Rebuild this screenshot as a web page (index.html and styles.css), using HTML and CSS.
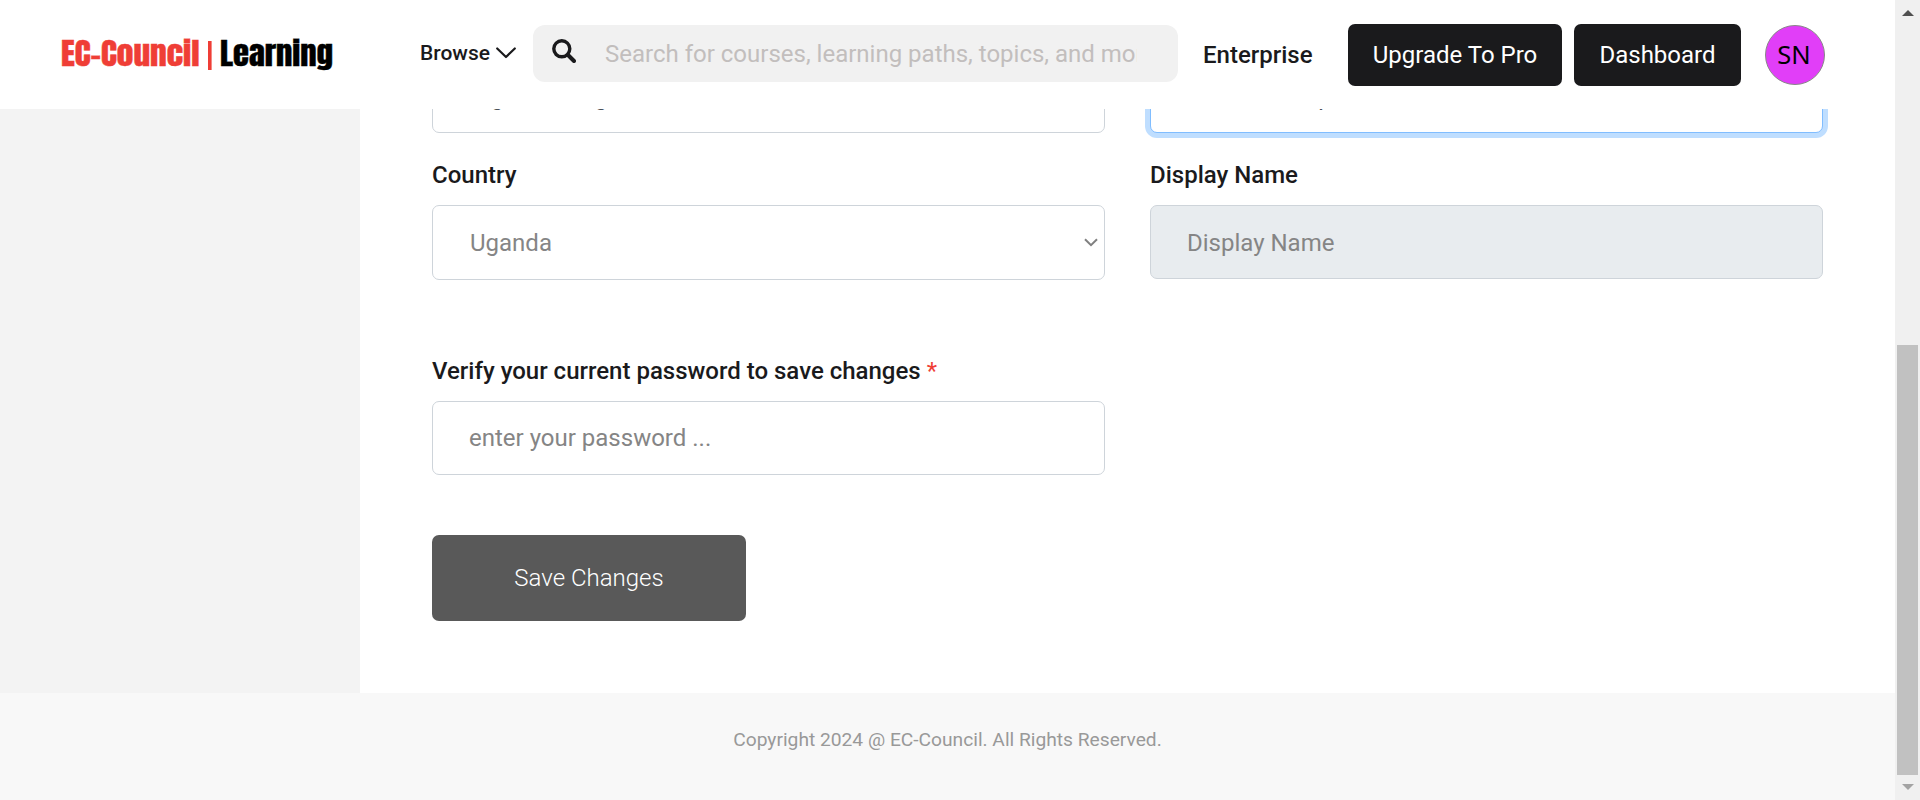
FILE: index.html
```html
<!DOCTYPE html>
<html lang="en">
<head>
<meta charset="utf-8">
<title>EC-Council Learning</title>
<link rel="stylesheet" href="styles.css">
</head>
<body>
<div class="window">
  <div class="page">
    <header class="header">
      <svg class="logo" width="276" height="60" viewBox="0 -10 276 60" role="img">
        <text class="logo-text logo-red" x="1" y="31" textLength="138.500" lengthAdjust="spacingAndGlyphs">EC-Council</text>
        <rect class="logo-bar" x="148" y="6" width="3.6" height="29"/>
        <text class="logo-text" x="160" y="31" textLength="113" lengthAdjust="spacingAndGlyphs">Learning</text>
      </svg>
      <a class="browse">Browse
        <svg width="20" height="12" viewBox="0 0 20 12"><path d="M1.2 1.5 10 10 18.800 1.500" fill="none" stroke="#1a1a1c" stroke-width="2.200" stroke-linecap="round" stroke-linejoin="round"/></svg>
      </a>
      <label class="search">
        <svg width="24" height="24" viewBox="0 0 24 24" fill="none" stroke="#1a1a1c"><circle cx="9.800" cy="9.800" r="8" stroke-width="3.400"/><path d="M16 16l6 6" stroke-width="4" stroke-linecap="round"/></svg>
        <input class="search-input" placeholder="Search for courses, learning paths, topics, and more">
      </label>
      <a class="enterprise">Enterprise</a>
      <a class="nav-btn upgrade">Upgrade To Pro</a>
      <a class="nav-btn dashboard">Dashboard</a>
      <span class="avatar">SN</span>
    </header>
    <main class="main">
      <aside class="sidebar"></aside>
      <form class="form">
        <div class="row row-first">
          <input class="field filled" value="Digital Designer">
          <input class="field filled focused" value="Web Developer">
        </div>
        <div class="row row-second">
          <div>
            <label class="label">Country</label>
            <div class="field select">Uganda
              <svg width="14" height="9" viewBox="0 0 14 9"><path d="M1 1.200 7 7.200 13 1.200" fill="none" stroke="#808080" stroke-width="2"/></svg>
            </div>
          </div>
          <div>
            <label class="label">Display Name</label>
            <input class="field disabled" placeholder="Display Name" disabled>
          </div>
        </div>
        <div class="row row-third">
          <div>
            <label class="label">Verify your current password to save changes <span class="required">*</span></label>
            <input class="field" type="password" placeholder="enter your password ...">
          </div>
        </div>
        <button class="save" type="button">Save Changes</button>
      </form>
    </main>
    <footer class="footer">Copyright 2024 @ EC-Council. All Rights Reserved.</footer>
  </div>
  <div class="scrollbar">
    <svg width="12" height="6" viewBox="0 0 12 6"><path d="M0 6 6 0l6 6z" fill="#505050"/></svg>
    <div class="thumb"></div>
    <svg width="12" height="6" viewBox="0 0 12 6"><path d="M0 0l6 6 6-6z" fill="#a3a3a3"/></svg>
  </div>
</div>
</body>
</html>
```
FILE: styles.css
```css
* { box-sizing: border-box; }
body { margin: 0; height: 800px; overflow: hidden; background: #fff; color: #1a1a1c; font-family: Roboto, sans-serif; font-size: 24px; }
input, button { font: inherit; }
.window { display: grid; grid-template-columns: 1895px 25px; height: 800px; }
.page { display: grid; grid-template-rows: 109px 584px 107px; height: 800px; }

.header { display: flex; align-items: center; padding-left: 60px; background: #fff; }
.logo { flex: none; margin-right: 84px; overflow: visible; }
.logo-text { font-family: Impact, Anton, "Open Sans", sans-serif; font-weight: 400; font-size: 29px; fill: #000; stroke: #000; stroke-width: .4px; }
.logo-red { fill: #ef3e36; stroke: #ef3e36; }
.logo-bar { fill: #ef3e36; }
.browse { display: flex; align-items: center; gap: 6px; width: 113px; font-size: 21px; font-weight: 500; line-height: 28px; margin-bottom: 3px; }
.search { display: flex; align-items: center; width: 645px; height: 57px; padding: 0 41px 0 19px; gap: 29px; margin-bottom: 2px; border-radius: 12px; background: #f1f1f1; }
.search svg { flex: none; margin-bottom: 5px; }
.search-input { flex: 1; min-width: 0; padding: 0; border: 0; background: none; outline: none; }
.search-input::placeholder { color: #c2bebd; opacity: 1; }
.enterprise { width: 145px; margin-left: 25px; font-weight: 500; }
.nav-btn { display: flex; align-items: center; justify-content: center; height: 62px; border-radius: 7px; background: #1a1a1c; color: #fff; }
.upgrade { width: 214px; }
.dashboard { width: 167px; margin-left: 12px; }
.avatar { display: flex; align-items: center; justify-content: center; width: 60px; height: 60px; margin-left: 24px; padding-right: 2px; border: 1px solid #888; border-radius: 50%; background: #e13ef8; color: #000; font: 25.500px/1 "Noto Sans", sans-serif; }

.main { display: grid; grid-template-columns: 360px 1fr; min-height: 0; overflow: hidden; }
.sidebar { background: #f3f3f3; }
.form { margin-top: -50px; padding: 0 72px; }
.row { display: grid; grid-template-columns: 673px 673px; gap: 45px; }
.row-first { height: 74px; }
.row-second { margin-top: 26px; }
.row-third { margin-top: 75px; }
.label { display: block; height: 46px; line-height: 32px; font-weight: 500; }
.required { color: #ef3e36; font-weight: 400; }
.field { display: block; width: 100%; height: 74px; padding: 0 36px; border: 1px solid #ced4da; border-radius: 7px; background: #fff; color: #495057; outline: none; }
.field::placeholder { color: #858585; opacity: 1; }
.filled { padding-top: 1px; color: #495057; word-spacing: 5px; }
.focused { padding-left: 37px; border-color: #80bdff; box-shadow: 0 0 0 5px #bfdeff; }
.select { display: flex; align-items: center; justify-content: space-between; height: 75px; padding: 0 6px 0 37px; color: #858585; }
.disabled { padding-top: 1px; background: #e8ecef; }
.save { display: block; width: 314px; height: 86px; margin-top: 60px; padding: 0; border: 0; border-radius: 7px; background: #595959; color: #fff; font-weight: 300; }

.footer { display: flex; justify-content: center; padding-top: 35px; background: #f8f8f8; color: #999; font-size: 19.200px; line-height: 24px; }

.scrollbar { display: flex; flex-direction: column; align-items: center; justify-content: space-between; padding: 10px 0; background: #f0f0f0; }
.thumb { width: 21px; height: 430px; margin: auto 0 9px; background: #c1c1c1; }
```
